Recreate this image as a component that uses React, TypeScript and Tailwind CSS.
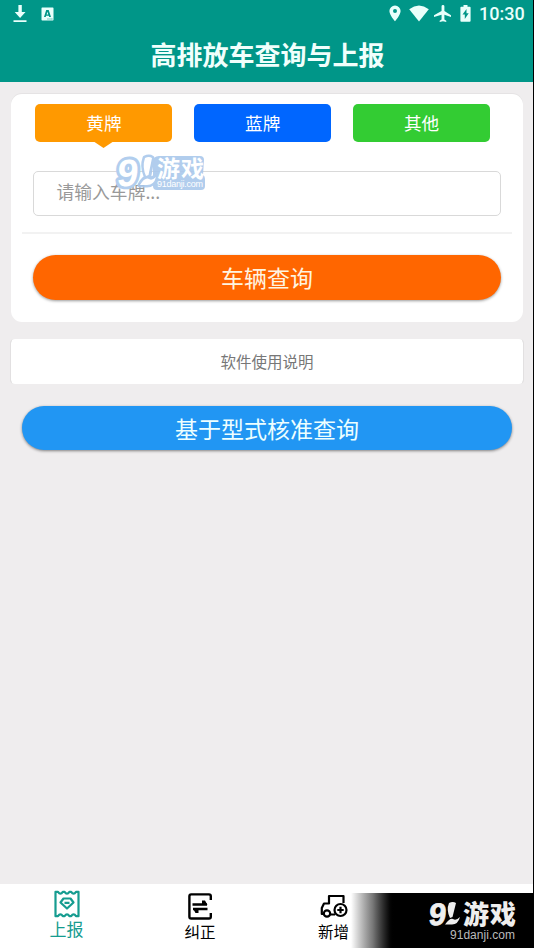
import clsx from "clsx";

interface PlateTabProps {
  label: string;
  className: string;
  active?: boolean;
}

function PlateTab({ label, className, active }: PlateTabProps) {
  return (
    <button
      className={clsx(
        "relative h-[37.5px] w-[137px] rounded-[5px] text-[17.6px] text-white",
        className
      )}
    >
      {label}
      {active && (
        <svg
          className="absolute left-[58px] top-[37px]"
          width="21"
          height="7"
          viewBox="0 0 21 7"
          fill="#ff9900"
        >
          <path d="M0 0H21L10.5 7Z" />
        </svg>
      )}
    </button>
  );
}

function StatusBar() {
  return (
    <div className="flex h-7 items-center justify-between pl-[13px] pr-[8px] text-[#e9fffb]">
      <div className="flex items-center gap-[13.5px]">
        <svg width="14" height="18" viewBox="0 0 14 18" fill="currentColor">
          <path d="M5.4 0h3.4v7h3.7L7.1 13 1.7 7h3.7ZM.5 15.3h13v1.8H.5Z" />
        </svg>
        <svg
          className="-mt-px"
          width="13"
          height="14"
          viewBox="0 0 13 14"
          fill="currentColor"
        >
          <path
            fillRule="evenodd"
            d="M1.2.5h10.6q.7 0 .7.7v11.6q0 .7-.7.7H1.2q-.7 0-.7-.7V1.2q0-.7.7-.7ZM5.2 3 3 10h1.7l.4-1.3h2.7L8.2 10H10L7.7 3ZM6.4 4.8l.9 2.7H5.6ZM6.5 11.6v.9h1v-.9ZM8.5 11.6v.9h1v-.9ZM10.4 11.6v.9h1v-.9Z"
          />
        </svg>
      </div>
      <div className="flex items-center">
        <svg
          className="-mt-px"
          width="12"
          height="17"
          viewBox="0 0 12 17"
          fill="currentColor"
        >
          <path
            fillRule="evenodd"
            d="M6 .5A5.6 5.6 0 0 0 .4 6.1C.4 10.2 6 16.3 6 16.3S11.6 10.2 11.6 6.1A5.6 5.6 0 0 0 6 .5ZM6 4a2 2 0 1 1 0 4 2 2 0 0 1 0-4Z"
          />
        </svg>
        <svg
          className="-mt-px ml-2"
          width="20"
          height="17"
          viewBox="0 0 20 17"
          fill="currentColor"
        >
          <path d="M.2 4.2Q10-3 19.8 4.2L10 16.5Z" />
        </svg>
        <svg
          className="-mt-[2px] ml-[5px]"
          width="17"
          height="17"
          viewBox="3 2 18 20"
          preserveAspectRatio="none"
          fill="currentColor"
        >
          <path d="M21 16v-2l-7-5V3.5a1.5 1.5 0 0 0-3 0V9l-8 5v2l8-2.5V19l-2 1.5V22l3.5-1 3.5 1v-1.5L14 19v-5.5z" />
        </svg>
        <svg
          className="-mt-[2px] ml-[9px]"
          width="11"
          height="17"
          viewBox="0 0 11 17"
          fill="currentColor"
        >
          <path
            fillRule="evenodd"
            d="M3.5 0h4v1.7h2.2q.9 0 .9.9v13.2q0 .9-.9.9H1.3q-.9 0-.9-.9V2.6q0-.9.9-.9h2.2ZM6.5 4 2.5 9.5h2.3V14l3.9-5.7H6.5Z"
          />
        </svg>
        <span className="ml-[8px] w-[46px] whitespace-nowrap font-[Roboto] text-[18px] font-medium leading-7">
          10:30
        </span>
      </div>
    </div>
  );
}

// Floating site badge over the plate input
function FloatingBadge() {
  return (
    <svg
      className="pointer-events-none absolute left-[98px] top-[57px] overflow-visible"
      width="100"
      height="42"
      viewBox="0 0 100 42"
    >
      <g
        fill="#a9c8ec"
        stroke="#a9c8ec"
        strokeLinejoin="round"
        strokeWidth="5"
        opacity="0.9"
      >
        <path
          d="M50 5h41q4 0 4 4l-1 15q2 1 2 4v7q0 4-4 4H48q-4 0-4-4V11q0-6 6-6Z"
          stroke="none"
        />
        <path d="M36 7q4-2 7 0l-3 17-3 1q-4-9-1-18ZM31 34q5-9 9-7 3 2 7-2-2 9-9 9Z" />
      </g>
      <g fill="#fff">
        <text
          transform="translate(7 34.5) skewX(-6)"
          fontFamily="Liberation Sans, sans-serif"
          fontSize="38"
          fontWeight="700"
          stroke="#b2ceee"
          strokeWidth="6"
          strokeLinejoin="round"
          paintOrder="stroke"
        >
          9
        </text>
        <path d="M36 7q4-2 7 0l-3.500 17-2.500 1q-4-9-1-18ZM31 34q5-8 9-6 3 2 7-2-2 8-9 8Z" />
        <text
          x="48"
          y="26"
          fontFamily="Noto Sans CJK SC, sans-serif"
          fontSize="23"
          fontWeight="700"
          textLength="47"
        >
          游戏
        </text>
        <text
          x="48"
          y="36"
          fontFamily="Liberation Sans, sans-serif"
          fontSize="9"
          textLength="46"
        >
          91danji.com
        </text>
      </g>
    </svg>
  );
}

function CornerBadge() {
  return (
    <div className="absolute bottom-0 right-0 h-[55px] w-[182px] bg-linear-to-r from-white from-0% via-[#777] via-12% to-black to-24%">
      <svg
        className="overflow-visible"
        width="182"
        height="55"
        viewBox="0 0 182 55"
        fill="#eee"
      >
        <text
          transform="translate(77 31.5) skewX(-6)"
          fontFamily="Liberation Sans, sans-serif"
          fontSize="31"
          fontWeight="700"
          stroke="#eee"
          strokeWidth="0.8"
        >
          9
        </text>
        <path d="M98 10q4-2 7 0l-3.500 14-2.500 1q-4-8-1-15ZM94 31.500q5-7 8-5.500 3 2 7-2-2 7.500-8 7.500Z" />
        <text
          x="112"
          y="30.5"
          fontFamily="Noto Sans CJK SC, sans-serif"
          fontSize="26"
          fontWeight="900"
          textLength="53"
        >
          游戏
        </text>
        <text
          x="99"
          y="45.5"
          fontFamily="Liberation Sans, sans-serif"
          fontSize="12"
          textLength="65"
          fill="#bbb"
        >
          91danji.com
        </text>
      </svg>
    </div>
  );
}

function ReportIcon() {
  return (
    <svg
      width="26"
      height="28"
      viewBox="0 0 26 28"
      fill="none"
      stroke="currentColor"
      strokeWidth="2.2"
      strokeLinejoin="round"
    >
      <path d="M1.5 1.8H4q2.4 3.6 4.8 0h1.8q2.4 3.6 4.8 0h1.8q2.4 3.6 4.8 0h2.5V26.2H22q-2.4-3.6-4.8 0h-1.8q-2.4-3.6-4.8 0H8.8q-2.4-3.6-4.8 0H1.5Z" />
      <path d="M9.5 8.5h7l3 4-6.5 6-6.5-6ZM10.5 12.8h5" />
    </svg>
  );
}

function CorrectIcon() {
  return (
    <svg
      width="24"
      height="27"
      viewBox="0 0 24 27"
      fill="none"
      stroke="currentColor"
      strokeWidth="2.4"
    >
      <path d="M22.8 7V3.2q0-1.8-1.8-1.8H3.2q-1.8 0-1.8 1.8v20.5q0 1.8 1.8 1.8H21q1.8 0 1.8-1.8V20" />
      <path d="M4.5 11.5h14.5M5 16h14.5" />
      <path
        d="M14 7.500h3l2.500 4.500h-5.500ZM5 15.500h5.500v4.500H7.500Z"
        fill="currentColor"
        stroke="none"
      />
    </svg>
  );
}

function AddCarIcon() {
  return (
    <svg
      width="28"
      height="24"
      viewBox="0 0 28 24"
      fill="none"
      stroke="currentColor"
      strokeWidth="2.2"
      strokeLinejoin="round"
    >
      <path d="M3.5 20H1.8v-6L4 9.5h5V2H23.5v7M10.5 20.5H15" />
      <circle cx="7" cy="19.5" r="3.2" />
      <circle cx="20.5" cy="16" r="6" />
      <path d="M20.5 12.8v6.4M17.3 16h6.4" />
    </svg>
  );
}

export default function App() {
  return (
    <div className="relative flex h-[948px] w-[534px] flex-col overflow-hidden border-r border-black bg-[#efedee] font-['Noto_Sans_CJK_SC',sans-serif]">
      <header className="h-[82px] bg-[#009688]">
        <StatusBar />
        <h1 className="pl-[2px] text-center text-[26px] font-bold leading-[51px] text-[#f0fffc]">
          高排放车查询与上报
        </h1>
      </header>

      <main className="flex-1 pl-[11px] pr-[10px] pt-3">
        <section className="relative h-[228px] rounded-[11px] bg-white px-[11px] pt-[10px] shadow-[0_-1px_0_#e5e3e4]">
          <div className="flex justify-between pl-[13.4px] pr-[22px]">
            <PlateTab label="黄牌" className="bg-[#ff9900]" active />
            <PlateTab label="蓝牌" className="bg-[#0066ff]" />
            <PlateTab label="其他" className="bg-[#33cc33]" />
          </div>
          <div className="mx-[11px] mt-[29.5px] h-[45px] rounded-[5px] border border-[#d9d9d9] pl-[22.5px] text-[17.8px] leading-[38px] text-[#999]">
            请输入车牌...
          </div>
          <div className="mt-4 h-[2px] bg-[#f2f2f2]" />
          <button className="mx-[11px] mt-[21px] block h-[45px] w-[468px] rounded-full bg-[#ff6600] text-[23px] text-[#fff4e0] shadow-[0_1px_3px_#0006]">
            车辆查询
          </button>
          <FloatingBadge />
        </section>

        <button className="mt-[17px] block h-[45px] w-full rounded-[4px] bg-white text-[15.5px] text-[#777] shadow-[1px_0_1px_-1px_#0008,-1px_0_1px_-1px_#0008]">
          软件使用说明
        </button>

        <button className="mx-[11px] mt-[22px] block h-[44px] w-[490px] rounded-full bg-[#2196f3] text-[23px] text-[#edffff] shadow-[0_1px_3px_#0007]">
          基于型式核准查询
        </button>
      </main>

      <nav className="flex h-[64px] bg-white text-[15.5px] text-black">
        <div className="flex w-[133px] flex-col items-center pt-[6px] text-[17px] text-[#169c90]">
          <ReportIcon />
          <span className="leading-[22px]">上报</span>
        </div>
        <div className="flex w-[134px] flex-col items-center pt-[9px]">
          <CorrectIcon />
          <span className="leading-[23px]">纠正</span>
        </div>
        <div className="flex w-[133px] flex-col items-center pt-[10px]">
          <AddCarIcon />
          <span className="leading-[27px]">新增</span>
        </div>
      </nav>
      <CornerBadge />
    </div>
  );
}
